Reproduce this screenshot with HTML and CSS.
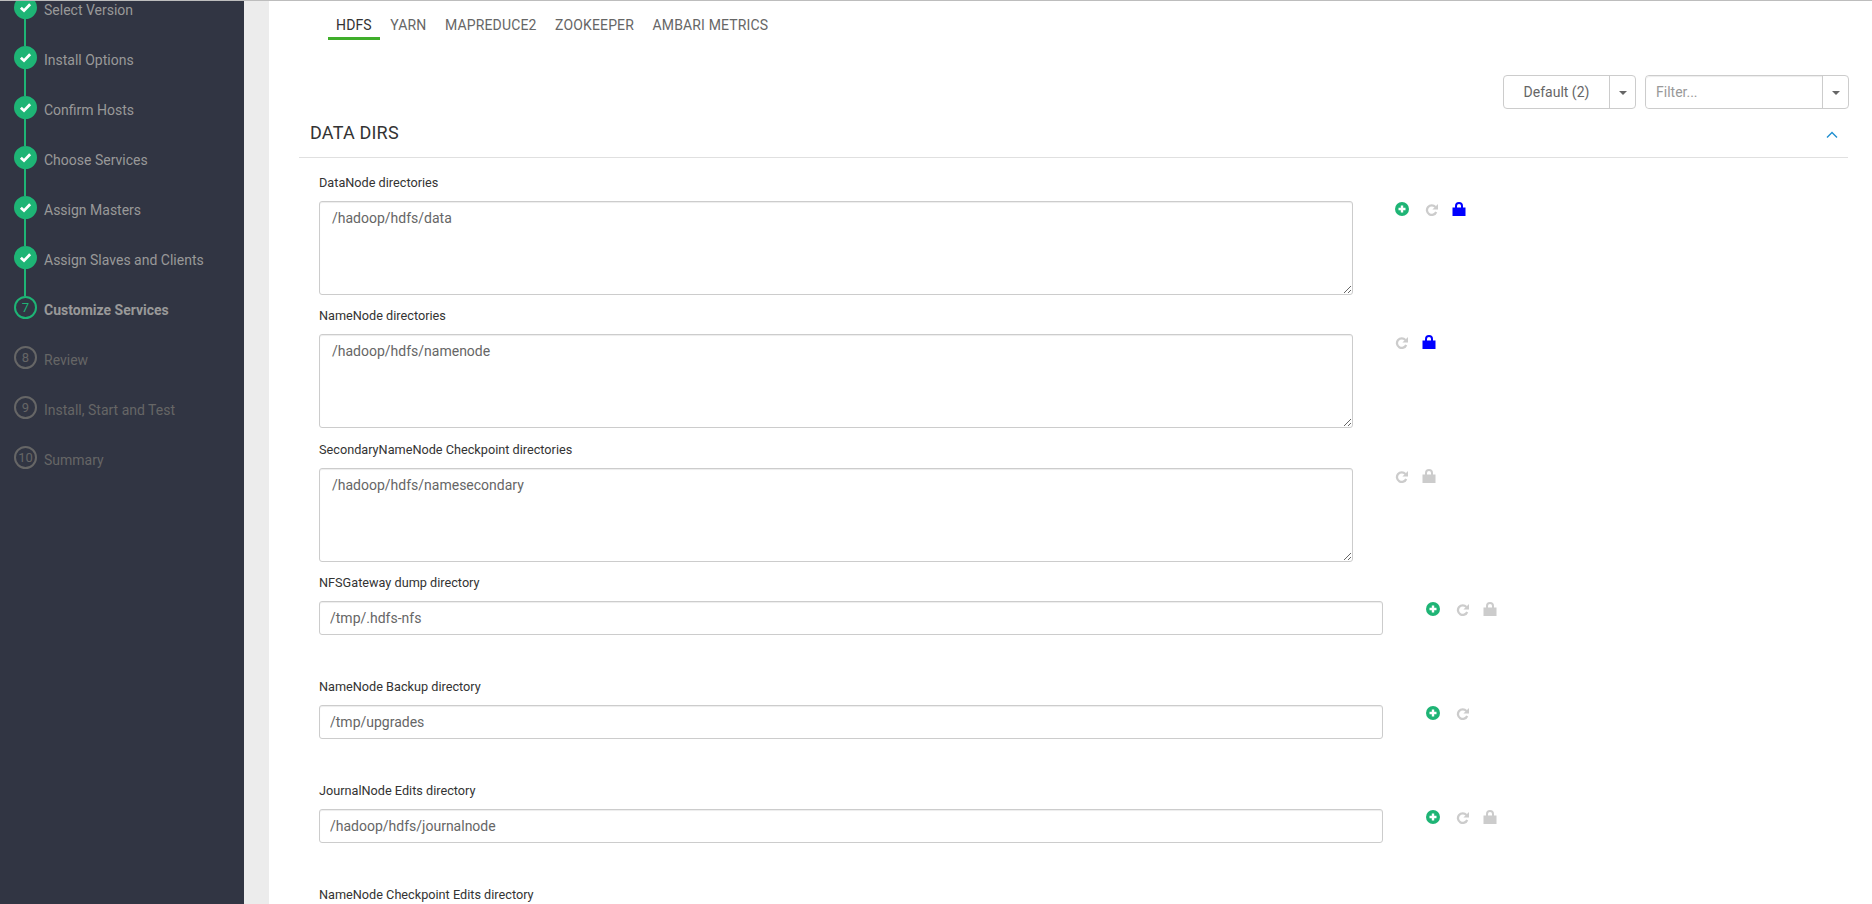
FILE: index.html
```html
<!DOCTYPE html>
<html>
    <head>
        <title>Customize Services</title>
        <link rel="stylesheet" href="styles.css">
    </head>
    <body>
        <svg class="defs" width="0" height="0">
            <symbol id="i-plus" viewBox="0 0 14 14">
                <circle cx="7" cy="7" r="7" fill="#1eb475"/>
                <path d="M7 3.5v7M3.5 7h7" stroke="#fff" stroke-width="2.4"/>
            </symbol>
            <symbol id="i-undo" viewBox="0 0 14 14">
                <path d="M10.4 5A4.8 4.8 0 1 0 11.2 10" fill="none" stroke="currentColor" stroke-width="2.3"/>
                <path d="M13 2v5.6H7.4z" fill="currentColor"/>
            </symbol>
            <symbol id="i-lock" viewBox="0 0 14 14">
                <path d="M4 6.5V4a3 3 0 0 1 6 0v2.5" fill="none" stroke="currentColor" stroke-width="2"/>
                <rect x="0.5" y="5.5" width="13" height="8.5" fill="currentColor"/>
            </symbol>
            <symbol id="i-check" viewBox="0 0 14 14">
                <path d="M2 7.2l3.4 3.2L12 3.6" fill="none" stroke="#fff" stroke-width="3"/>
            </symbol>
        </svg>

        <div class="page">
            <aside class="sidebar">
                <ol class="steps">
                    <li class="step done"><span class="dot"><svg class="check"><use href="#i-check"/></svg></span>Select Version</li>
                    <li class="step done"><span class="dot"><svg class="check"><use href="#i-check"/></svg></span>Install Options</li>
                    <li class="step done"><span class="dot"><svg class="check"><use href="#i-check"/></svg></span>Confirm Hosts</li>
                    <li class="step done"><span class="dot"><svg class="check"><use href="#i-check"/></svg></span>Choose Services</li>
                    <li class="step done"><span class="dot"><svg class="check"><use href="#i-check"/></svg></span>Assign Masters</li>
                    <li class="step done"><span class="dot"><svg class="check"><use href="#i-check"/></svg></span>Assign Slaves and Clients</li>
                    <li class="step active"><span class="dot">7</span>Customize Services</li>
                    <li class="step"><span class="dot">8</span>Review</li>
                    <li class="step"><span class="dot">9</span>Install, Start and Test</li>
                    <li class="step"><span class="dot">10</span>Summary</li>
                </ol>
            </aside>

            <div class="gutter"></div>

            <main class="content">
                <ul class="tabs">
                    <li class="tab active">HDFS</li>
                    <li class="tab">YARN</li>
                    <li class="tab">MAPREDUCE2</li>
                    <li class="tab">ZOOKEEPER</li>
                    <li class="tab">AMBARI METRICS</li>
                </ul>

                <div class="toolbar">
                    <div class="btn-group">
                        <button class="btn-main">Default (2)</button>
                        <button class="btn-caret"><span class="caret"></span></button>
                    </div>
                    <div class="btn-group filter">
                        <input class="filter-input" type="text" placeholder="Filter...">
                        <button class="btn-caret"><span class="caret"></span></button>
                    </div>
                </div>

                <div class="section-head">
                    <h2>DATA DIRS</h2>
                    <svg class="chevron" viewBox="0 0 12 8"><path d="M1 6.5l5-5 5 5" fill="none" stroke="#1f8fd0" stroke-width="1.4"/></svg>
                </div>

                <div class="fields">
                    <div class="field">
                        <label>DataNode directories</label>
                        <div class="row">
                            <textarea>/hadoop/hdfs/data</textarea>
                            <div class="actions">
                                <svg class="icon plus"><use href="#i-plus"/></svg>
                                <svg class="icon grey"><use href="#i-undo"/></svg>
                                <svg class="icon blue"><use href="#i-lock"/></svg>
                            </div>
                        </div>
                    </div>

                    <div class="field">
                        <label>NameNode directories</label>
                        <div class="row">
                            <textarea>/hadoop/hdfs/namenode</textarea>
                            <div class="actions">
                                <svg class="icon grey"><use href="#i-undo"/></svg>
                                <svg class="icon blue"><use href="#i-lock"/></svg>
                            </div>
                        </div>
                    </div>

                    <div class="field">
                        <label>SecondaryNameNode Checkpoint directories</label>
                        <div class="row">
                            <textarea>/hadoop/hdfs/namesecondary</textarea>
                            <div class="actions">
                                <svg class="icon grey"><use href="#i-undo"/></svg>
                                <svg class="icon grey"><use href="#i-lock"/></svg>
                            </div>
                        </div>
                    </div>

                    <div class="field single">
                        <label>NFSGateway dump directory</label>
                        <div class="row">
                            <input type="text" value="/tmp/.hdfs-nfs">
                            <div class="actions">
                                <svg class="icon plus"><use href="#i-plus"/></svg>
                                <svg class="icon grey"><use href="#i-undo"/></svg>
                                <svg class="icon grey"><use href="#i-lock"/></svg>
                            </div>
                        </div>
                    </div>

                    <div class="field single">
                        <label>NameNode Backup directory</label>
                        <div class="row">
                            <input type="text" value="/tmp/upgrades">
                            <div class="actions">
                                <svg class="icon plus"><use href="#i-plus"/></svg>
                                <svg class="icon grey"><use href="#i-undo"/></svg>
                            </div>
                        </div>
                    </div>

                    <div class="field single">
                        <label>JournalNode Edits directory</label>
                        <div class="row">
                            <input type="text" value="/hadoop/hdfs/journalnode">
                            <div class="actions">
                                <svg class="icon plus"><use href="#i-plus"/></svg>
                                <svg class="icon grey"><use href="#i-undo"/></svg>
                                <svg class="icon grey"><use href="#i-lock"/></svg>
                            </div>
                        </div>
                    </div>

                    <div class="field single">
                        <label>NameNode Checkpoint Edits directory</label>
                    </div>
                </div>
            </main>
        </div>
    </body>
</html>
```

FILE: styles.css
```css
* {box-sizing: border-box}

html, body {
  height: 100%;
  overflow: hidden;
}

body {
  margin: 0;
  font-family: Roboto, "Liberation Sans", sans-serif;
  font-size: 14px;
  color: #666;
  background-color: #fff;
}

.defs {
  position: absolute;
}

.page {
  display: flex;
  height: 100vh;
  overflow: hidden;
  border-top: 1px solid #bdbdbd;
}

/* Left wizard steps */
.sidebar {
  flex: 0 0 244px;
  background-color: #313543;
  overflow: hidden;
}

.steps {
  list-style: none;
  margin: -18px 0 0 0;
  padding: 0 0 0 14px;
}

.step {
  display: flex;
  align-items: center;
  gap: 7px;
  height: 50px;
  font-size: 14px;
  color: #666;
  padding-top: 3px;
}

.step.done {
  color: #999;
}

.step.active {
  color: #999;
  font-weight: 700;
}

.dot {
  position: relative;
  display: flex;
  align-items: center;
  justify-content: center;
  flex: 0 0 23px;
  height: 23px;
  margin-top: -4px;
  border: 2px solid #666;
  border-radius: 50%;
  font-size: 13px;
  font-weight: 400;
  color: #666;
}

.done .dot {
  background-color: #1eb475;
  border-color: #1eb475;
}

.active .dot {
  border-color: #1eb475;
  color: #1eb475;
}

/* line between two steps */
.done .dot::after {
  content: "";
  position: absolute;
  left: 8px;
  top: 21px;
  width: 2px;
  height: 27px;
  background-color: #1eb475;
}

.check {
  width: 13px;
  height: 13px;
}

.gutter {
  flex: 0 0 25px;
  background-color: #ececec;
}

/* Main content */
.content {
  flex: 1;
  min-width: 0;
  padding: 0 23px 0 30px;
}

.tabs {
  display: flex;
  gap: 2.5px;
  list-style: none;
  margin: 0;
  padding: 12px 0 0 29px;
  height: 40px;
}

.tab {
  padding: 4px 8px 0;
  height: 27px;
  color: #666;
  letter-spacing: .15px;
}

.tab.active {
  color: #333;
  border-bottom: 3px solid #3fae2a;
}

.toolbar {
  display: flex;
  justify-content: flex-end;
  gap: 9px;
  margin-top: 34px;
  height: 34px;
}

.btn-group {
  display: flex;
  height: 34px;
  border: 1px solid #ccc;
  border-radius: 4px;
  background-color: #fff;
}

.btn-main {
  width: 106px;
  border: none;
  border-right: 1px solid #ccc;
  background: none;
  font: inherit;
  color: #666;
  padding: 0;
}

.btn-caret {
  width: 25px;
  border: none;
  background: none;
  padding: 0;
}

.caret {
  display: inline-block;
  border-top: 4px solid #666;
  border-left: 4px solid transparent;
  border-right: 4px solid transparent;
  vertical-align: middle;
}

.filter {
  width: 204px;
}

.filter-input {
  flex: 1;
  min-width: 0;
  height: 32px;
  margin: 0;
  padding: 0 10px;
  border: none;
  border-right: 1px solid #ccc;
  border-radius: 4px 0 0 4px;
  font: inherit;
  box-shadow: inset 0 1px 1px rgba(0, 0, 0, .075);
}

.filter-input::placeholder {
  color: #999;
}

.section-head {
  display: flex;
  align-items: center;
  justify-content: space-between;
  height: 49px;
  margin-right: 1px;
  padding: 0 10px 2px 11px;
  border-bottom: 1px solid #e0e0e0;
}

.section-head h2 {
  margin: 0;
  font-size: 18px;
  font-weight: 400;
  letter-spacing: .2px;
  color: #333;
}

.chevron {
  width: 12px;
  height: 8px;
  margin-top: 6px;
}

.fields {
  padding-left: 20px;
}

.field {
  height: 133.4px;
  padding-top: 16px;
}

.field.single {
  height: 104px;
}

.field label {
  display: block;
  height: 20px;
  margin-bottom: 7px;
  font-size: 12.7px;
  line-height: 17px;
  color: #333;
}

.row {
  display: flex;
  align-items: flex-start;
}

textarea, .row input {
  display: block;
  margin: 0;
  border: 1px solid #ccc;
  border-radius: 3px;
  font: inherit;
  color: #666;
  background-color: #fff;
  box-shadow: inset 0 1px 1px rgba(0, 0, 0, .075);
}

textarea {
  width: 1034px;
  height: 94px;
  padding: 8px 12px;
}

.row input {
  width: 1064px;
  height: 34px;
  padding: 0 10px;
}

.actions {
  display: flex;
  gap: 13px;
  padding: 1px 0 0 42px;
}

.field.single .actions {
  padding-left: 43px;
}

.icon {
  width: 14px;
  height: 14px;
}

.plus {
  margin-right: 3px;
}

.grey {
  color: #ccc;
}

.blue {
  color: #00f;
}
```
